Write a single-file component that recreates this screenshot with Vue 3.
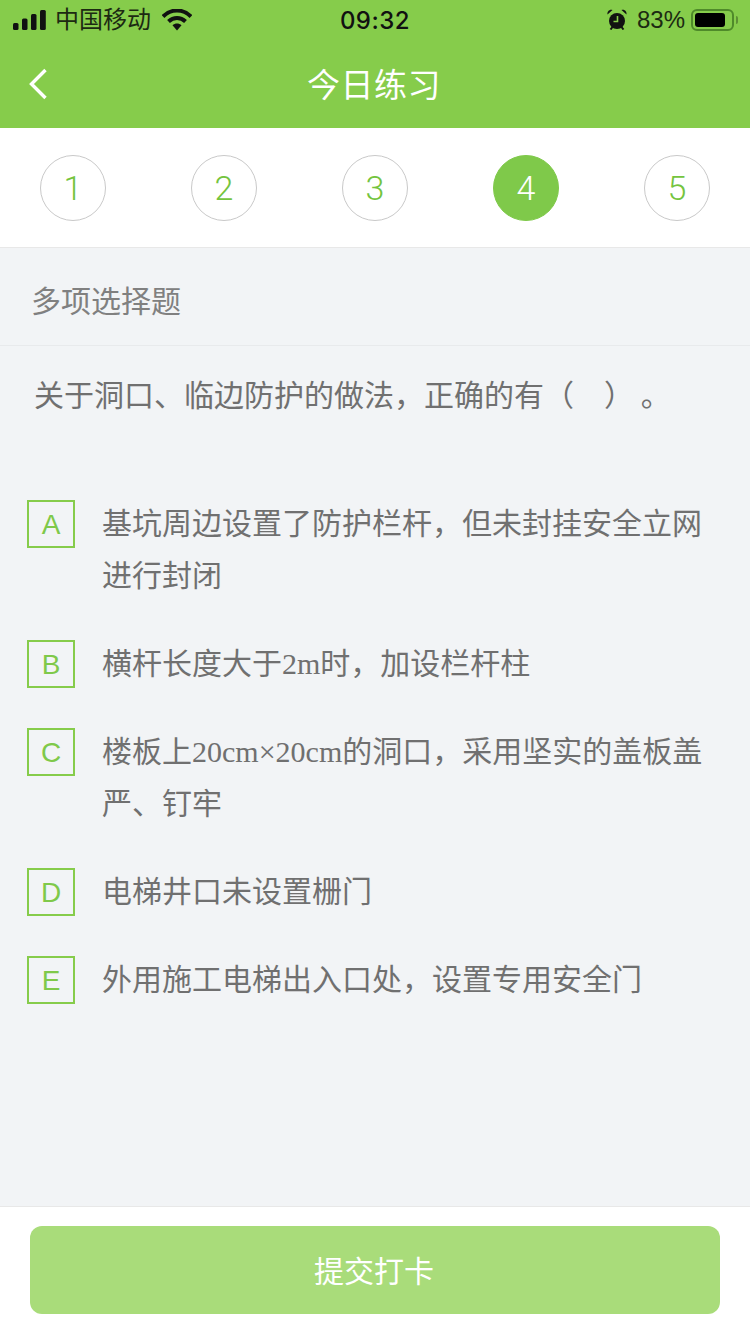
<script setup>
const steps = [1, 2, 3, 4, 5]
const current = 4
const question = '关于洞口、临边防护的做法\uFF0C正确的有\uFF08\u3000\uFF09\u00A0。'
const options = [
  { key: 'A', text: '基坑周边设置了防护栏杆\uFF0C但未封挂安全立网进行封闭' },
  { key: 'B', text: '横杆长度大于2m时\uFF0C加设栏杆柱' },
  { key: 'C', text: '楼板上20cm×20cm的洞口\uFF0C采用坚实的盖板盖严、钉牢' },
  { key: 'D', text: '电梯井口未设置栅门' },
  { key: 'E', text: '外用施工电梯出入口处\uFF0C设置专用安全门' },
]
</script>

<template>
  <div class="page">
    <header class="top">
      <div class="status">
        <div class="status-left">
          <svg class="signal" width="33" height="20" viewBox="0 0 33 20">
            <rect x="0" y="13" width="5.5" height="7" rx="1.5" />
            <rect x="9" y="8.5" width="5.5" height="11.5" rx="1.5" />
            <rect x="18" y="4" width="5.5" height="16" rx="1.5" />
            <rect x="27" y="0" width="5.8" height="20" rx="1.5" />
          </svg>
          <span class="carrier">中国移动</span>
          <svg class="wifi" width="30" height="22" viewBox="0 0 30 22">
            <path d="M1 7.5C9-.5 21-.5 29 7.5" fill="none" stroke="#111" stroke-width="4" />
            <path d="M6.5 12.5C11.5 7.8 18.5 7.8 23.5 12.5" fill="none" stroke="#111" stroke-width="4" />
            <path d="M10.5 16.2C13 14 17 14 19.5 16.2L15 21.5Z" fill="#111" />
          </svg>
        </div>
        <span class="time">09:32</span>
        <div class="status-right">
          <svg class="alarm" width="20" height="21" viewBox="0 0 20 21">
            <circle cx="10" cy="12" r="8" fill="#111" />
            <path d="M0.5 5.5C0 2.5 2.5 0 5.5 1ZM19.5 5.5C20 2.5 17.5 0 14.5 1Z" fill="#111" />
            <path d="M3.5 20.5 5.5 18M16.5 20.5 14.5 18" stroke="#111" stroke-width="2" />
            <path d="M10.5 7V12.5H6.5" fill="none" stroke="#86cc4b" stroke-width="1.6" />
          </svg>
          <span class="percent">83%</span>
          <div class="battery"><i></i></div>
          <div class="battery-tip"></div>
        </div>
      </div>
      <div class="nav">
        <svg class="back" width="20" height="32" viewBox="0 0 20 32">
          <path d="M17.5 2 3.5 16 17.5 30" fill="none" stroke="#fff" stroke-width="3.4" />
        </svg>
        <h1>今日练习</h1>
      </div>
    </header>

    <div class="steps">
      <div v-for="s in steps" :key="s" class="step" :class="{ active: s === current }">{{ s }}</div>
    </div>

    <main class="body">
      <div class="kind">多项选择题</div>
      <p class="question">{{ question }}</p>
      <ul class="options">
        <li v-for="o in options" :key="o.key" class="option">
          <span class="letter">{{ o.key }}</span>
          <span class="text">{{ o.text }}</span>
        </li>
      </ul>
    </main>

    <footer class="foot">
      <button class="submit">提交打卡</button>
    </footer>
  </div>
</template>

<style>
html, body { margin: 0; padding: 0; }
</style>

<style scoped>
.page {
  width: 750px;
  height: 1334px;
  display: flex;
  flex-direction: column;
  background: #f2f4f6;
  font-family: "Noto Sans CJK SC", sans-serif;
  overflow: hidden;
}
.top {
  background: #86cc4b;
  height: 128px;
  flex: none;
}
.status {
  height: 40px;
  display: flex;
  align-items: center;
  justify-content: space-between;
  padding: 0 12px 0 13px;
  position: relative;
  color: #111;
}
.status-left, .status-right {
  display: flex;
  align-items: center;
}
.signal { fill: #111; }
.carrier {
  font-size: 24px;
  line-height: 30px;
  margin: 0 0 4px 9px;
  color: #1c2a12;
}
.wifi { margin-left: 11px; }
.time {
  position: absolute;
  left: 0;
  right: 0;
  text-align: center;
  font-family: Inter, "Liberation Sans", sans-serif;
  font-size: 24px;
  font-weight: 500;
  letter-spacing: 0.5px;
}
.alarm { margin-bottom: 1px; }
.percent {
  font-family: "Liberation Sans", sans-serif;
  font-size: 24px;
  margin-left: 10px;
  color: #1c2a12;
}
.battery {
  width: 43px;
  height: 22px;
  margin-left: 6px;
  box-sizing: border-box;
  border: 2px solid #4f8a2a;
  border-radius: 6px;
  padding: 2px;
}
.battery i {
  display: block;
  width: 30px;
  height: 100%;
  background: #000;
  border-radius: 3px;
}
.battery-tip {
  width: 2px;
  height: 8px;
  margin-left: 2px;
  background: #5d8f34;
  border-radius: 0 2px 2px 0;
}
.nav {
  height: 88px;
  position: relative;
  display: flex;
  align-items: center;
  justify-content: center;
}
.back {
  position: absolute;
  left: 28px;
  top: 28px;
}
h1 {
  margin: 0 2px 2px 0;
  font-size: 33px;
  font-weight: 400;
  color: #fff;
  letter-spacing: 0.5px;
}
.steps {
  flex: none;
  height: 120px;
  box-sizing: border-box;
  padding: 27px 40px 0;
  background: #fff;
  border-bottom: 1px solid #e8e8e8;
  display: flex;
  justify-content: space-between;
}
.step {
  width: 66px;
  height: 66px;
  box-sizing: border-box;
  border: 1px solid #c9c9c9;
  border-radius: 50%;
  display: flex;
  align-items: center;
  justify-content: center;
  font-family: Roboto, "Liberation Sans", sans-serif;
  font-size: 34px;
  font-weight: 300;
  color: #74c43e;
}
.step.active {
  background: #7fc94a;
  border-color: #7fc94a;
  color: #fff;
}
.body {
  flex: 1;
  min-height: 0;
}
.kind {
  height: 98px;
  box-sizing: border-box;
  padding: 29px 0 0 31px;
  border-bottom: 1px solid #e8eaec;
  font-size: 30px;
  line-height: 44px;
  color: #808080;
}
.question {
  margin: 0;
  padding: 25px 0 0 34px;
  font-size: 30px;
  line-height: 44px;
  color: #707070;
}
.options {
  list-style: none;
  margin: 0;
  padding: 83px 30px 0 27px;
  display: flex;
  flex-direction: column;
  gap: 36px;
}
.option {
  display: flex;
  align-items: flex-start;
  gap: 27px;
}
.letter {
  flex: none;
  width: 48px;
  height: 48px;
  margin-top: 2px;
  padding-top: 1px;
  box-sizing: border-box;
  border: 2px solid #86cc4b;
  display: flex;
  align-items: center;
  justify-content: center;
  font-family: "Liberation Sans", sans-serif;
  font-size: 28px;
  color: #7fc94a;
}
.text {
  font-family: "Liberation Serif", "Noto Sans CJK SC", serif;
  font-size: 30px;
  line-height: 52px;
  color: #707070;
}
.foot {
  flex: none;
  height: 128px;
  box-sizing: border-box;
  padding: 19px 30px 0;
  background: #fff;
  border-top: 1px solid #e8e8e8;
}
.submit {
  display: block;
  width: 100%;
  height: 88px;
  border: 0;
  border-radius: 12px;
  background: #a9dc7a;
  color: #fff;
  font-family: "Noto Sans CJK SC", sans-serif;
  font-size: 30px;
  padding: 0 2px 2px 0;
}
</style>
